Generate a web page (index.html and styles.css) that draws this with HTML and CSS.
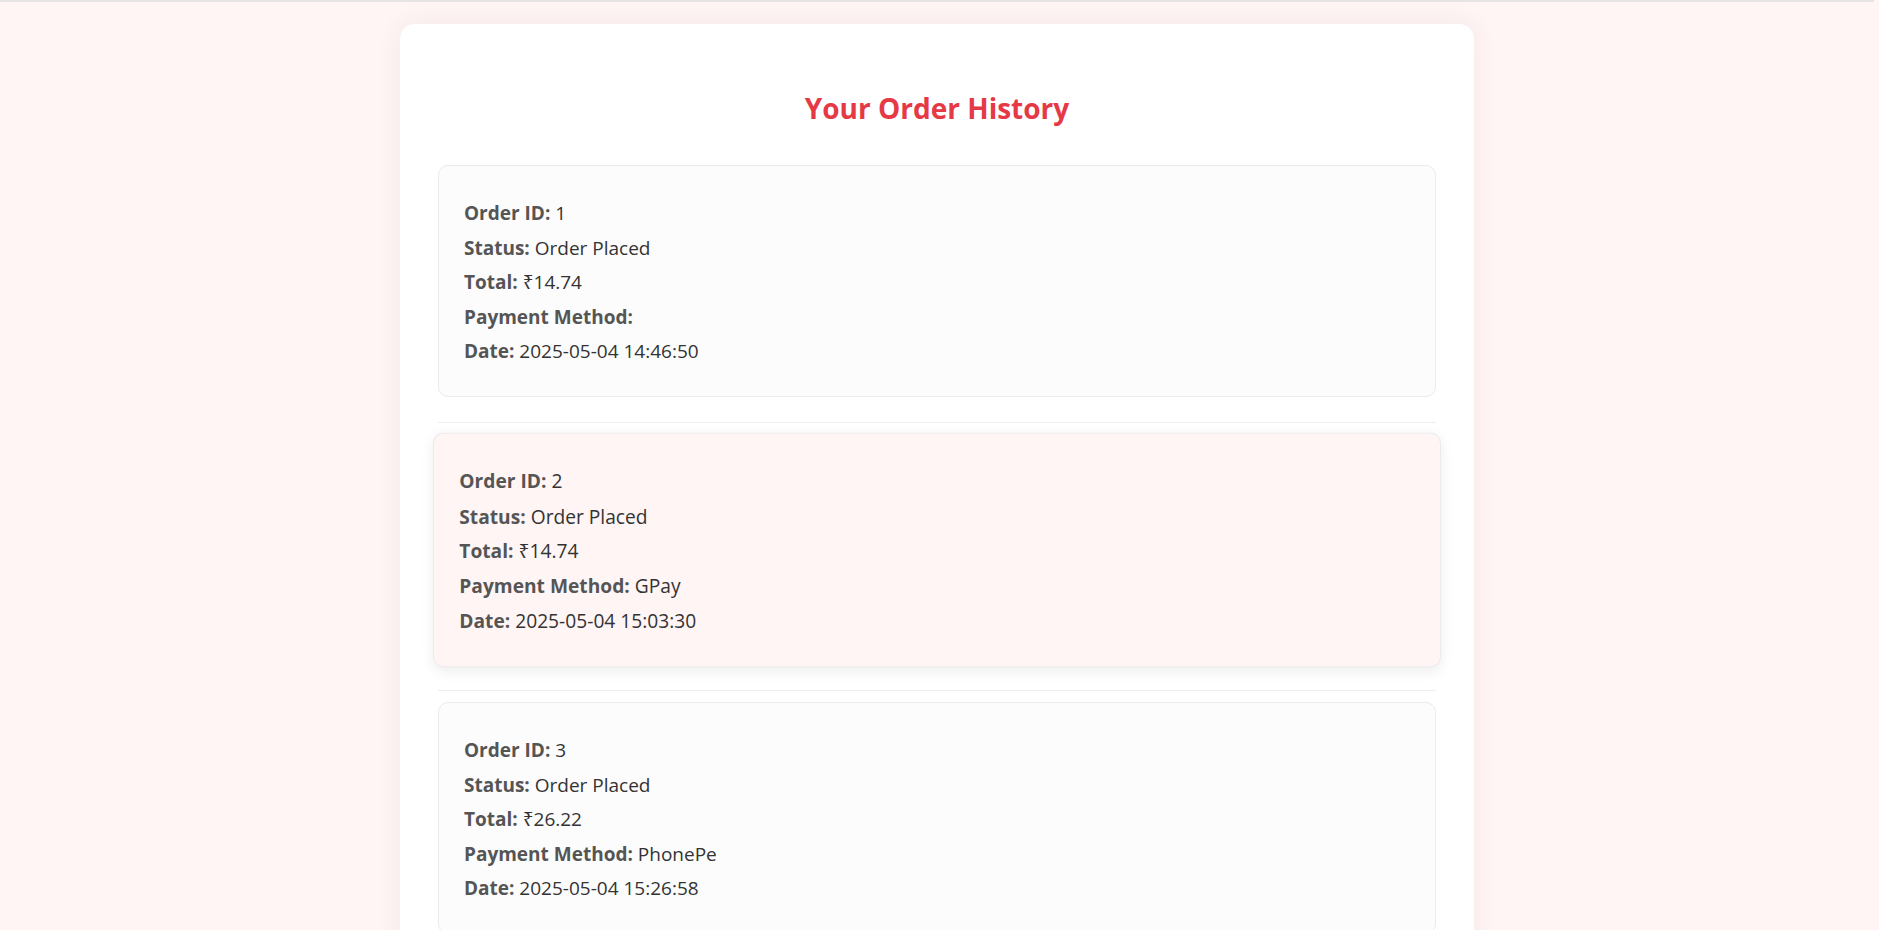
FILE: index.html
```html
<!DOCTYPE html>
<html lang="en">
<head>
<meta charset="utf-8">
<title>Your Order History</title>
<link rel="stylesheet" href="styles.css">
</head>
<body>
<div class="topline"></div>
<main class="container">
  <h2 class="title">Your Order History</h2>
  <div class="order">
    <p><strong>Order ID:</strong> 1</p>
    <p><strong>Status:</strong> Order Placed</p>
    <p><strong>Total:</strong> ₹14.74</p>
    <p><strong>Payment Method:</strong> </p>
    <p><strong>Date:</strong> 2025-05-04 14:46:50</p>
  </div>
  <hr class="sep">
  <div class="order is-active">
    <p><strong>Order ID:</strong> 2</p>
    <p><strong>Status:</strong> Order Placed</p>
    <p><strong>Total:</strong> ₹14.74</p>
    <p><strong>Payment Method:</strong> GPay</p>
    <p><strong>Date:</strong> 2025-05-04 15:03:30</p>
  </div>
  <hr class="sep">
  <div class="order">
    <p><strong>Order ID:</strong> 3</p>
    <p><strong>Status:</strong> Order Placed</p>
    <p><strong>Total:</strong> ₹26.22</p>
    <p><strong>Payment Method:</strong> PhonePe</p>
    <p><strong>Date:</strong> 2025-05-04 15:26:58</p>
  </div>
  <hr class="sep">
</main>
</body>
</html>
```
FILE: styles.css
```css
* { box-sizing: border-box; }
html, body { margin: 0; padding: 0; }
body {
  background: #fff5f5;
  font-family: "Open Sans", "Noto Sans", "Liberation Sans", sans-serif;
  color: #333;
  padding-right: 5px;
}
.topline {
  height: 2px;
  background: #e6e4e4;
}
.container {
  width: 1074px;
  margin: 22px auto 40px;
  background: #fff;
  border-radius: 15px;
  padding: 38px 38px 40px;
  box-shadow: 0 0 24px rgba(120, 60, 60, 0.08);
}
.title {
  margin: 27px 0 38px;
  text-align: center;
  color: #e63946;
  font-size: 28px;
  font-weight: 700;
  line-height: 38px;
}
.order {
  background: #fcfcfc;
  border: 1px solid #ebebeb;
  border-radius: 10px;
  padding: 30px 25px 27px;
  margin-bottom: 25px;
}
.order.is-active {
  background: #fff5f5;
  transform: scale(1.01);
  box-shadow: 0 4px 14px rgba(0, 0, 0, 0.07);
}
.order p {
  margin: 0;
  font-size: 19px;
  line-height: 34.5px;
  color: #333;
}
.order strong {
  color: #555;
  font-weight: 700;
}
.sep {
  border: 0;
  border-top: 1px solid #eeeeee;
  margin: 0 0 11px;
}
```
